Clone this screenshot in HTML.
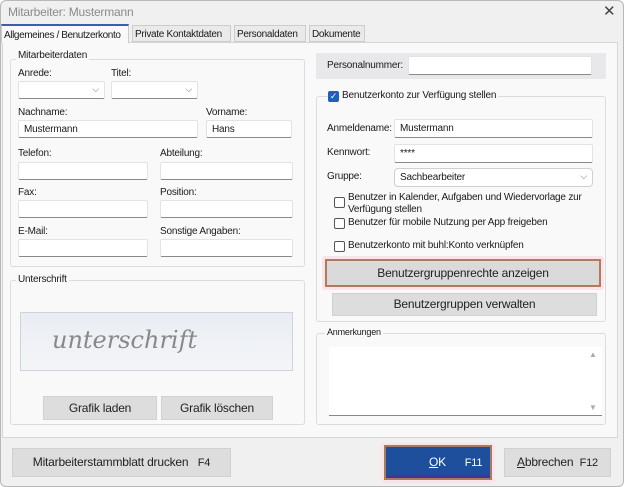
<!DOCTYPE html>
<html><head><meta charset="utf-8"><style>
*{box-sizing:border-box;margin:0;padding:0}
body{width:624px;height:487px;background:#fff;font-family:"Liberation Sans",sans-serif;font-size:10px;letter-spacing:-0.2px;color:#1a1a1a;position:relative;overflow:hidden;white-space:nowrap}
.a{position:absolute}
.win{left:0;top:0;width:624px;height:487px;background:#f0f0f0;border:1px solid #b8b8b8;border-radius:6px}
.inp{position:absolute;background:#fff;border:1px solid #e3e3e3;border-bottom:1px solid #8a8a8a;border-radius:2px;padding:3px 5px;font-size:10px}
.grp{position:absolute;border:1px solid #dcdcdc;border-radius:3px}
.lbl{position:absolute;background:#f9f9f9;padding:0 2px}
.btn{position:absolute;background:#dddddd;border:1px solid #d0d0d0;text-align:center;font-size:12px;color:#222}
.cb{position:absolute;width:11px;height:11px;border:1px solid #555;border-radius:2px;background:#fff}
.chev{position:absolute;right:5px;top:2px;font-size:9px;color:#666}
.tab{position:absolute;top:25px;height:17px;background:#eaeaea;border:1px solid #ccc;padding:3px 2px;font-size:10px;letter-spacing:-0.3px}
</style></head><body>
<div class="a win"></div>
<div class="a" style="left:8px;top:5px;color:#8a8a8a;font-size:12px">Mitarbeiter: Mustermann</div>
<div class="a" style="left:603px;top:2px;color:#444;font-size:15px">✕</div>
<div class="a" style="left:2px;top:42px;width:616px;height:396px;background:#f9f9f9;border:1px solid #d6d6d6"></div>
<div class="a" style="left:1px;top:24px;width:128px;height:19px;background:#f9f9f9;border:1px solid #ccc;border-top:2px solid #3a5fb0;border-bottom:none;padding:4px 2px;font-size:10px;letter-spacing:-0.4px">Allgemeines / Benutzerkonto</div>
<div class="tab" style="left:132px;width:99px">Private Kontaktdaten</div>
<div class="tab" style="left:234px;width:72px">Personaldaten</div>
<div class="tab" style="left:309px;width:56px">Dokumente</div>
<div class="grp" style="left:10px;top:59px;width:295px;height:208px"></div>
<div class="lbl" style="left:16px;top:50px">Mitarbeiterdaten</div>
<div class="a" style="left:18px;top:68px">Anrede:</div>
<div class="inp" style="left:18px;top:81px;width:87px;height:18px"><span class="chev">⌵</span></div>
<div class="a" style="left:111px;top:68px">Titel:</div>
<div class="inp" style="left:111px;top:81px;width:87px;height:18px"><span class="chev">⌵</span></div>
<div class="a" style="left:18px;top:107px">Nachname:</div>
<div class="inp" style="left:18px;top:120px;width:180px;height:18px">Mustermann</div>
<div class="a" style="left:206px;top:107px">Vorname:</div>
<div class="inp" style="left:206px;top:120px;width:86px;height:18px">Hans</div>
<div class="a" style="left:18px;top:148px">Telefon:</div>
<div class="inp" style="left:18px;top:162px;width:130px;height:18px"></div>
<div class="a" style="left:160px;top:148px">Abteilung:</div>
<div class="inp" style="left:160px;top:162px;width:133px;height:18px"></div>
<div class="a" style="left:18px;top:187px">Fax:</div>
<div class="inp" style="left:18px;top:200px;width:130px;height:18px"></div>
<div class="a" style="left:160px;top:187px">Position:</div>
<div class="inp" style="left:160px;top:200px;width:133px;height:18px"></div>
<div class="a" style="left:18px;top:226px">E-Mail:</div>
<div class="inp" style="left:18px;top:239px;width:130px;height:18px"></div>
<div class="a" style="left:160px;top:226px">Sonstige Angaben:</div>
<div class="inp" style="left:160px;top:239px;width:133px;height:18px"></div>
<div class="grp" style="left:10px;top:280px;width:295px;height:145px"></div>
<div class="lbl" style="left:16px;top:274px">Unterschrift</div>
<div class="a" style="left:20px;top:312px;width:273px;height:59px;background:linear-gradient(#e9edf3,#f4f5f8);border:1px solid #cfd4dc"></div>
<div class="a" style="left:52px;top:326px;font-family:'DejaVu Serif',serif;font-style:italic;font-size:24px;color:#888;letter-spacing:0">unterschrift</div>
<div class="btn" style="left:43px;top:396px;width:114px;height:24px;line-height:22px">Grafik laden</div>
<div class="btn" style="left:161px;top:396px;width:112px;height:24px;line-height:22px">Grafik löschen</div>
<div class="a" style="left:316px;top:53px;width:290px;height:26px;background:#e8e8ea"></div>
<div class="a" style="left:327px;top:60px">Personalnummer:</div>
<div class="inp" style="left:408px;top:56px;width:184px;height:19px"></div>
<div class="grp" style="left:316px;top:96px;width:290px;height:226px"></div>
<div class="a" style="left:328px;top:91px;width:11px;height:11px;background:#1f5fbf;border-radius:2px;color:#fff;font-size:9px;line-height:11px;text-align:center">✓</div>
<div class="lbl" style="left:340px;top:90px">Benutzerkonto zur Verfügung stellen</div>
<div class="a" style="left:327px;top:123px">Anmeldename:</div>
<div class="inp" style="left:394px;top:119px;width:199px;height:19px">Mustermann</div>
<div class="a" style="left:327px;top:147px">Kennwort:</div>
<div class="inp" style="left:394px;top:144px;width:199px;height:19px">****</div>
<div class="a" style="left:327px;top:171px">Gruppe:</div>
<div class="inp" style="left:394px;top:168px;width:199px;height:19px;border-radius:4px;border:1px solid #d0d0d0">Sachbearbeiter<span class="chev">⌵</span></div>
<div class="cb" style="left:334px;top:197px"></div>
<div class="a" style="left:348px;top:192px;line-height:12px">Benutzer in Kalender, Aufgaben und Wiedervorlage zur<br>Verfügung stellen</div>
<div class="cb" style="left:334px;top:218px"></div>
<div class="a" style="left:348px;top:217px">Benutzer für mobile Nutzung per App freigeben</div>
<div class="cb" style="left:334px;top:241px"></div>
<div class="a" style="left:348px;top:240px">Benutzerkonto mit buhl:Konto verknüpfen</div>
<div class="a" style="left:322px;top:256px;width:282px;height:34px;background:#fbe3ea;border-radius:3px"></div>
<div class="btn" style="left:325px;top:259px;width:276px;height:28px;line-height:25px;border:2px solid #b07a5c;background:#dadada">Benutzergruppenrechte anzeigen</div>
<div class="btn" style="left:332px;top:293px;width:265px;height:23px;line-height:21px">Benutzergruppen verwalten</div>
<div class="grp" style="left:316px;top:333px;width:290px;height:92px"></div>
<div class="lbl" style="left:325px;top:327px;font-size:9px">Anmerkungen</div>
<div class="a" style="left:329px;top:347px;width:273px;height:69px;background:#fff;border-bottom:1px solid #888"></div>
<div class="a" style="left:589px;top:350px;font-size:8px;color:#aaa">▲</div>
<div class="a" style="left:589px;top:403px;font-size:8px;color:#aaa">▼</div>
<div class="btn" style="left:12px;top:448px;width:219px;height:29px;line-height:27px">Mitarbeiterstammblatt drucken&nbsp;&nbsp; <span style="font-size:11px">F4</span></div>
<div class="a" style="left:381px;top:443px;width:114px;height:40px;background:#fbe3ea;border-radius:3px"></div>
<div class="a" style="left:384px;top:445px;width:108px;height:35px;border:2px solid #a87b5e;color:#fff;font-size:12px;line-height:31px;padding-left:43px;background:linear-gradient(#1d4f9c 85%,#4a2d9a)"><u>O</u>K&nbsp;&nbsp;&nbsp;&nbsp;&nbsp; <span style="font-size:11px">F11</span></div>
<div class="btn" style="left:504px;top:448px;width:107px;height:29px;line-height:27px"><u>A</u>bbrechen&nbsp; <span style="font-size:11px">F12</span></div>
</body></html>
